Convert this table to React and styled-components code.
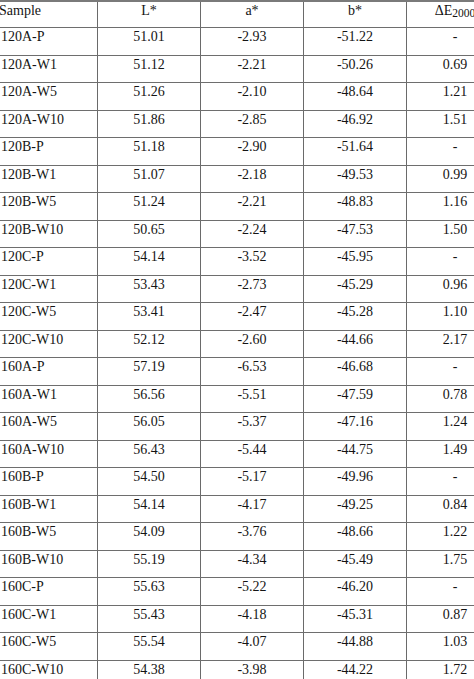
import styled, { createGlobalStyle } from 'styled-components';

const GlobalStyle = createGlobalStyle`
  html, body {
    margin: 0;
    padding: 0;
    background: #fff;
    overflow: hidden;
  }
`;

const rows = [
  ['120A-P', '51.01', '-2.93', '-51.22', '-'],
  ['120A-W1', '51.12', '-2.21', '-50.26', '0.69'],
  ['120A-W5', '51.26', '-2.10', '-48.64', '1.21'],
  ['120A-W10', '51.86', '-2.85', '-46.92', '1.51'],
  ['120B-P', '51.18', '-2.90', '-51.64', '-'],
  ['120B-W1', '51.07', '-2.18', '-49.53', '0.99'],
  ['120B-W5', '51.24', '-2.21', '-48.83', '1.16'],
  ['120B-W10', '50.65', '-2.24', '-47.53', '1.50'],
  ['120C-P', '54.14', '-3.52', '-45.95', '-'],
  ['120C-W1', '53.43', '-2.73', '-45.29', '0.96'],
  ['120C-W5', '53.41', '-2.47', '-45.28', '1.10'],
  ['120C-W10', '52.12', '-2.60', '-44.66', '2.17'],
  ['160A-P', '57.19', '-6.53', '-46.68', '-'],
  ['160A-W1', '56.56', '-5.51', '-47.59', '0.78'],
  ['160A-W5', '56.05', '-5.37', '-47.16', '1.24'],
  ['160A-W10', '56.43', '-5.44', '-44.75', '1.49'],
  ['160B-P', '54.50', '-5.17', '-49.96', '-'],
  ['160B-W1', '54.14', '-4.17', '-49.25', '0.84'],
  ['160B-W5', '54.09', '-3.76', '-48.66', '1.22'],
  ['160B-W10', '55.19', '-4.34', '-45.49', '1.75'],
  ['160C-P', '55.63', '-5.22', '-46.20', '-'],
  ['160C-W1', '55.43', '-4.18', '-45.31', '0.87'],
  ['160C-W5', '55.54', '-4.07', '-44.88', '1.03'],
  ['160C-W10', '54.38', '-3.98', '-44.22', '1.72'],
];

// the table is wider than the frame; the last column is cut off on the right
const Frame = styled.div`
  width: 474px;
  height: 679px;
  overflow: hidden;
`;

const Sheet = styled.div`
  width: 506px;
  border-top: 2px solid #7a7a7a;
  font-family: 'Liberation Serif', 'Times New Roman', serif;
  font-size: 14px;
  line-height: 16px;
  color: #141414;
`;

const Row = styled.div`
  display: grid;
  grid-template-columns: 97px 103px 103px 103px 100px;
  height: ${(p) => (p.$head ? '26px' : '27.52px')};
  box-sizing: border-box;
  border-bottom: 1px solid #6e6e6e;
`;

const Cell = styled.div`
  padding-top: 1px;
  white-space: nowrap;
  text-align: ${(p) => (p.$left ? 'left' : 'center')};
  padding-left: ${(p) => (p.$left ? '1px' : '0')};
  padding-right: ${(p) => (p.$last ? '3px' : '0')};
  border-left: ${(p) => (p.$left ? 'none' : '1.4px solid #6a6a6a')};
`;

const Sub = styled.span`
  font-size: 11.5px;
  position: relative;
  top: 2px;
`;

export default function App() {
  return (
    <Frame>
      <GlobalStyle />
      <Sheet>
        <Row $head>
          <Cell $left style={{ paddingLeft: 0, marginLeft: -1 }}>Sample</Cell>
          <Cell>L*</Cell>
          <Cell>a*</Cell>
          <Cell>b*</Cell>
          <Cell $last>
            ΔE<Sub>2000</Sub>
          </Cell>
        </Row>
        {rows.map((r) => (
          <Row key={r[0]}>
            <Cell $left>{r[0]}</Cell>
            <Cell>{r[1]}</Cell>
            <Cell>{r[2]}</Cell>
            <Cell>{r[3]}</Cell>
            <Cell $last>{r[4]}</Cell>
          </Row>
        ))}
      </Sheet>
    </Frame>
  );
}
